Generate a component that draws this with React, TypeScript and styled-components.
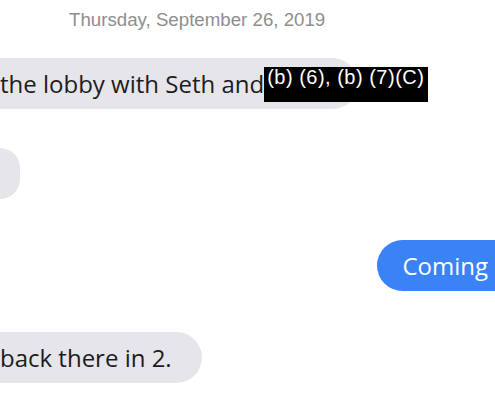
import React from 'react'
import styled, { createGlobalStyle } from 'styled-components'

const GlobalStyle = createGlobalStyle`
  html, body {
    margin: 0;
    padding: 0;
    background: #ffffff;
  }
  body {
    width: 495px;
    height: 400px;
    overflow: hidden;
  }
`

const Thread = styled.div`
  width: 495px;
  height: 400px;
  overflow: hidden;
  display: flex;
  flex-direction: column;
  font-family: 'Open Sans', 'Noto Sans', sans-serif;
`

const DateLine = styled.div`
  font-family: 'Liberation Sans', Arial, sans-serif;
  font-size: 18.7px;
  color: #8e8e8e;
  padding: 9px 0 0 69px;
  height: 50px;
  box-sizing: border-box;
`

const Row = styled.div<{ $mine?: boolean; $gap: number }>`
  display: flex;
  justify-content: ${(p) => (p.$mine ? 'flex-end' : 'flex-start')};
  margin-top: ${(p) => p.$gap}px;
`

const Bubble = styled.div<{ $mine?: boolean; $padL: number; $padR: number }>`
  display: flex;
  align-items: center;
  height: 51px;
  box-sizing: border-box;
  font-size: 24px;
  white-space: nowrap;
  background: ${(p) => (p.$mine ? '#3b82f6' : '#e5e5ea')};
  color: ${(p) => (p.$mine ? '#ffffff' : '#1c1c1e')};
  border-radius: ${(p) => (p.$mine ? '26px 0 0 26px' : '0 26px 26px 0')};
  padding: 0 ${(p) => p.$padR}px 0 ${(p) => p.$padL}px;
  min-width: 20px;
`

const Redaction = styled.span`
  display: inline-block;
  align-self: flex-start;
  margin-top: 9px;
  margin-right: -70px;
  width: 164px;
  height: 35px;
  background: #000;
  color: #fff;
  font-family: 'Liberation Sans', Arial, sans-serif;
  font-size: 20px;
  line-height: 21px;
  padding: 0 0 0 3px;
  box-sizing: border-box;
  letter-spacing: 0.5px;
`

export default function App() {
  return (
    <>
      <GlobalStyle />
      <Thread>
        <DateLine>Thursday, September 26, 2019</DateLine>
        <Row $gap={8}>
          <Bubble $padL={0} $padR={0}>
            the lobby with Seth and
            <Redaction>(b) (6), (b) (7)(C)</Redaction>
          </Bubble>
        </Row>
        <Row $gap={39}>
          <Bubble $padL={0} $padR={0} />
        </Row>
        <Row $mine $gap={41}>
          <Bubble $mine $padL={25} $padR={7}>Coming</Bubble>
        </Row>
        <Row $gap={41}>
          <Bubble $padL={0} $padR={30}>back there in 2.</Bubble>
        </Row>
      </Thread>
    </>
  )
}
